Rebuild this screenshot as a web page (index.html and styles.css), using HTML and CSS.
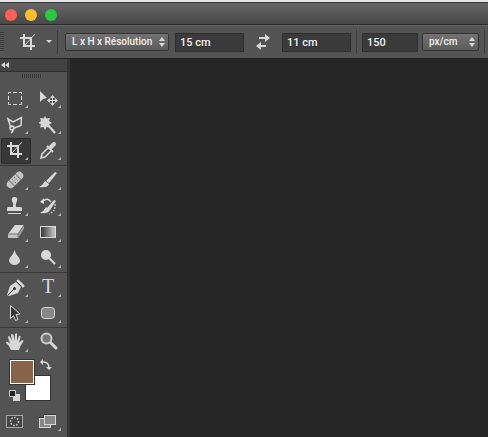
FILE: index.html
```html
<!DOCTYPE html>
<html lang="fr">
<head>
<meta charset="utf-8">
<title>Recadrage</title>
<link rel="stylesheet" href="styles.css">
</head>
<body>
<header class="titlebar">
  <button class="light close" aria-label="Fermer"></button>
  <button class="light minimize" aria-label="Réduire"></button>
  <button class="light expand" aria-label="Agrandir"></button>
</header>

<div class="options">
  <span class="grip"></span>
  <button class="preset" aria-label="Outil Recadrage">
    <svg width="34" height="20" viewBox="0 0 34 20"><path class="line2" d="M0 6h12M4 2v12M3 14h12M11 6v12"/><path class="line" d="M5 13L15 2"/><path class="fill" d="M26 8h6l-3 3z"/></svg>
  </button>
  <span class="rule"></span>
  <span class="picker ratio">
    <select aria-label="Rapport"><option>L x H x Résolution</option></select>
    <svg width="6" height="10" viewBox="0 0 6 10"><path class="fill" d="M0 4l3-4 3 4zM0 6h6l-3 4z"/></svg>
  </span>
  <input class="field" aria-label="Largeur" value="15 cm">
  <button class="swap" aria-label="Permuter">
    <svg width="16" height="16" viewBox="0 0 16 16"><path class="fill" d="M4 3h6V0l5 4-5 4V5H4zM11 11H6V8l-5 4 5 4v-3h5z"/></svg>
  </button>
  <input class="field" aria-label="Hauteur" value="11 cm">
  <span class="rule tight"></span>
  <input class="field resolution" aria-label="Résolution" value="150">
  <span class="picker unit">
    <select aria-label="Unité"><option>px/cm</option></select>
    <svg width="6" height="10" viewBox="0 0 6 10"><path class="fill" d="M0 4l3-4 3 4zM0 6h6l-3 4z"/></svg>
  </span>
  <span class="rule tight"></span>
</div>

<main class="workspace">
  <aside class="panel">
    <button class="collapse" aria-label="Réduire le panneau">
      <svg width="8" height="6" viewBox="0 0 8 6"><path class="fill" d="M4 0v6L0 3zM8 0v6L4 3z"/></svg>
    </button>
    <div class="handle"></div>

    <div class="tools">
      <button class="tool" aria-label="Rectangle de sélection"><svg viewBox="0 0 30 26"><path class="line" d="M7.500 8V6.500H10M12 6.500h4M18 6.500h2.500V8M20.500 10v4M20.500 16v2.500H18M16 18.500h-4M10 18.500H7.500V16M7.500 14v-4"/><path class="corner" d="M27 19v3h-3z"/></svg></button>
      <button class="tool" aria-label="Déplacement"><svg viewBox="0 0 30 26"><path class="fill" d="M6 5v11l3-3 4-1z"/><path class="line" d="M14 14.500h9M18.500 10v9"/><path class="fill" d="M18.500 9l2.500 3h-5zM18.500 20l2.500-3h-5zM13 14.500l3-2.500v5zM24 14.500L21 12v5z"/><path class="corner" d="M27 19v3h-3z"/></svg></button>
      <button class="tool" aria-label="Lasso polygonal"><svg viewBox="0 0 30 26"><path class="line1" d="M10 16L7 7l5 3 8.500-4.500-.5 8-8 3"/><circle class="line1" cx="11" cy="16" r="2"/><path class="line1" d="M11 17q2 2-1 4"/><path class="corner" d="M27 19v3h-3z"/></svg></button>
      <button class="tool" aria-label="Baguette magique"><svg viewBox="0 0 30 26"><path class="fill" d="M11 4l1.500 2.500L16 6l-1 3 3 2-3 1.500 1 3-3.500-.5L11 18l-1.500-3-3.500.5 1-3L4.500 11 7 9 6 6l3.500.5z"/><path class="line2" d="M14 13l7 8"/><path class="corner" d="M27 19v3h-3z"/></svg></button>
      <button class="tool active" aria-label="Recadrage"><svg viewBox="0 0 30 26"><path class="line2" d="M6 8h12M10 4v12M9 16h12M17 8v12"/><path class="line" d="M11 15L21 4"/><path class="corner" d="M27 19v3h-3z"/></svg></button>
      <button class="tool" aria-label="Pipette"><svg viewBox="0 0 30 26"><path class="line1" d="M14 10l-6 6-1 4 4-1 6-6"/><path class="line2" d="M13 8l6 6"/><path class="line4" d="M17 9l3-3"/><path class="corner" d="M27 19v3h-3z"/></svg></button>
    </div>
    <div class="tools">
      <button class="tool" aria-label="Correcteur"><svg viewBox="0 0 30 26"><g transform="rotate(-45 14 13)"><rect class="metal" x="4" y="9" width="20" height="8" rx="4"/><path class="seam" d="M9.500 9v8M18.500 9v8M12 11h1M15 11h1M12 13h1M15 13h1M12 15h1M15 15h1"/></g><path class="corner" d="M27 20v3h-3z"/></svg></button>
      <button class="tool" aria-label="Pinceau"><svg viewBox="0 0 30 26"><path class="fill" d="M21 5l2 1-8 10-3-2zM11 14l4 3q-1 4-10 3 4-2 6-6z"/><path class="corner" d="M27 20v3h-3z"/></svg></button>
      <button class="tool" aria-label="Tampon"><svg viewBox="0 0 30 26"><path class="fill" d="M12 14q1-3-1-6-1-4 2.500-4T16 8q-2 3-1 6h5q1 0 1 2v2H6v-2q0-2 1-2z"/><path class="line" d="M7 20.500h13"/><path class="corner" d="M27 20v3h-3z"/></svg></button>
      <button class="tool" aria-label="Forme d’historique"><svg viewBox="0 0 30 26"><path class="fill" d="M20 7l2 1-6 9-3-2zM12 14l4 3q-2 4-10 3 4-2 6-6z"/><path class="line1" d="M9 8q5-4 8 1"/><path class="fill" d="M6 9l4-4v6z"/><path class="dots" d="M21 11q1 7-6 10"/><path class="corner" d="M27 20v3h-3z"/></svg></button>
      <button class="tool" aria-label="Gomme"><svg viewBox="0 0 30 26"><path class="fill" d="M14 6h9l-6 9H7z"/><path class="shade" d="M23 6v4l-6 9v-4z"/><path class="metal" d="M7 15h10v4H7z"/><path class="seam" d="M7 15h10l6-9M17 15v4"/><path class="corner" d="M27 20v3h-3z"/></svg></button>
      <button class="tool" aria-label="Dégradé"><svg viewBox="0 0 30 26"><defs><linearGradient id="ramp"><stop offset="0" stop-color="#333"/><stop offset="1" stop-color="#ccc"/></linearGradient></defs><rect class="ramp" x="6.500" y="7.500" width="15" height="11"/><path class="corner" d="M27 20v3h-3z"/></svg></button>
      <button class="tool" aria-label="Goutte d’eau"><svg viewBox="0 0 30 26"><path class="fill" d="M13.500 5q1 4 4 7 3 4 0 6.500-4 3-8 0-3-3 0-6.500 3-3 4-7z"/><path class="corner" d="M27 20v3h-3z"/></svg></button>
      <button class="tool" aria-label="Densité -"><svg viewBox="0 0 30 26"><circle class="fill" cx="12" cy="10" r="5"/><path class="line2" d="M15 13l6 6"/><path class="corner" d="M27 20v3h-3z"/></svg></button>
    </div>
    <div class="tools">
      <button class="tool" aria-label="Plume"><svg viewBox="0 0 30 26"><path class="fill" d="M6 21l3-9 6-4 5 5-3 6-9 3z"/><path class="line3" d="M17 7l5 5"/><path class="dark" d="M7 21l6-6M15.500 7.500l5 5"/><circle class="hole" cx="13.500" cy="14.500" r="1.500"/><path class="corner" d="M27 20v3h-3z"/></svg></button>
      <button class="tool" aria-label="Texte"><svg viewBox="0 0 30 26"><text class="glyph" x="14" y="19" text-anchor="middle">T</text><path class="corner" d="M27 20v3h-3z"/></svg></button>
      <button class="tool" aria-label="Sélection de tracé"><svg viewBox="0 0 30 26"><path class="outline" d="M9.500 5.500v13l3-3 2 5 2.500-1-2-5 4-.5z"/><path class="corner" d="M27 20v3h-3z"/></svg></button>
      <button class="tool" aria-label="Rectangle arrondi"><svg viewBox="0 0 30 26"><rect class="shape" x="7.500" y="7.500" width="13" height="11" rx="3"/><path class="corner" d="M27 20v3h-3z"/></svg></button>
    </div>
    <div class="tools">
      <button class="tool" aria-label="Main"><svg viewBox="0 0 30 26"><path class="fill" d="M10 21q-1-4-5-7 0-2 2-1l2 2-2-7q1-2 2 0l2 4-1-6q1-2 2.500 0l1 6 .5-7q1.500-1.500 2 0v7l2-5q2-1 1.500 1l-1.500 6 3-3q2 0 1 2-3 4-4 8z"/><path class="corner" d="M27 20v3h-3z"/></svg></button>
      <button class="tool" aria-label="Zoom"><svg viewBox="0 0 30 26"><circle class="lens" cx="12.500" cy="9.500" r="5"/><path class="line3" d="M17 14l5 5"/></svg></button>
    </div>

    <div class="colors">
      <button class="swatch back" aria-label="Arrière-plan"></button>
      <button class="swatch front" aria-label="Premier plan"></button>
      <button class="flip" aria-label="Permuter les couleurs"><svg width="12" height="12" viewBox="0 0 12 12"><path class="line1" d="M3 3q6 0 6 6"/><path class="fill" d="M0 3l3-3v6zM9 11L6 8h6z"/></svg></button>
      <button class="reset" aria-label="Couleurs par défaut"><svg width="11" height="11" viewBox="0 0 11 11"><path class="fill" d="M4 4h7v7H4z"/><path class="chip" d="M.5.5h6v6h-6z"/></svg></button>
    </div>

    <div class="tools modes">
      <button class="tool" aria-label="Masque"><svg viewBox="0 0 30 26"><rect class="frame" x="5.500" y="7.500" width="16" height="12"/><circle class="dots" cx="13.500" cy="13.500" r="4"/></svg></button>
      <button class="tool" aria-label="Mode d’écran"><svg viewBox="0 0 30 26"><path class="dark" d="M10 6.500h12M5 9.500h5"/><rect class="shape" x="5.500" y="10.500" width="11" height="9"/><rect class="shape" x="10.500" y="7.500" width="11" height="9"/><path class="corner" d="M27 20v3h-3z"/></svg></button>
    </div>
  </aside>
  <section class="canvas" aria-label="Document"></section>
</main>
</body>
</html>
```
FILE: styles.css
```css
* { box-sizing: border-box; }

body {
  margin: 0;
  min-height: 100vh;
  display: flex;
  flex-direction: column;
  background: #262626;
  font: 500 11px/14px Roboto, "Liberation Sans", sans-serif;
  color: #f0f0f0;
}

button {
  padding: 0;
  border: 0;
  background: none;
}

svg { display: block; }

.titlebar {
  height: 25px;
  display: flex;
  align-items: center;
  gap: 8px;
  padding: 4px 5px 0;
  border-top: 2px solid #e3e5e6;
  border-bottom: 1px solid #292929;
  background: linear-gradient(#3a3a3a 1px, #666 1px, #484848);
}

.light {
  width: 12px;
  height: 12px;
  border-radius: 50%;
}

.close { background: #ff5f57; }
.minimize { background: #ffbd2e; }
.expand { background: #28ca42; }

.options {
  height: 34px;
  display: flex;
  align-items: center;
  overflow: hidden;
  border-top: 1px solid #636363;
  border-bottom: 1px solid #222;
  background: #535353;
}

.options > * { flex-shrink: 0; }

.grip {
  width: 4px;
  height: 20px;
  background: repeating-linear-gradient(#333 0 1px, #606060 1px 2px);
}

.preset { margin: 0 3px 0 16px; }

.rule {
  width: 1px;
  height: 24px;
  background: #3a3a3a;
}

.tight { margin: 0 5px; }

.picker {
  position: relative;
  height: 18px;
}

.picker svg {
  position: absolute;
  right: 4px;
  top: 4px;
  pointer-events: none;
}

.picker select {
  appearance: none;
  width: 100%;
  height: 18px;
  padding: 0 6px;
  border: 1px solid #333;
  border-radius: 2px;
  background: linear-gradient(#727272, #5c5c5c);
  font: inherit;
  font-size: 10px;
  color: inherit;
}

.ratio {
  width: 104px;
  margin: 0 6px 0 7px;
}

.unit {
  width: 57px;
  margin-left: 4px;
}

.field {
  width: 69px;
  height: 19px;
  padding: 0 4px;
  border: 1px solid #2e2e2e;
  background: #3a3a3a;
  font: inherit;
  color: inherit;
}

.resolution { width: 56px; }

.swap { margin: 0 11px; }

.workspace {
  flex: 1;
  display: flex;
}

.panel {
  width: 70px;
  border-right: 3px solid #333;
  background: #535353;
}

.collapse {
  display: block;
  width: 100%;
  height: 13px;
  padding-left: 1px;
  border-bottom: 1px solid #303030;
  background: #424242;
}

.handle {
  width: 20px;
  height: 4px;
  margin: 2px 0 8px 22px;
  background: repeating-linear-gradient(90deg, #333 0 1px, #5c5c5c 1px 2px);
}

.tools {
  display: grid;
  grid-template-columns: 30px 30px;
  column-gap: 3px;
  padding-left: 1px;
}

.tools + .tools {
  margin-top: 1px;
  padding-top: 1px;
  border-top: 1px solid #383838;
}

.tool {
  height: 26px;
  border-radius: 2px;
}

.active {
  background: #383838;
  box-shadow: inset 0 0 0 1px #2c2c2c;
}

.tool svg {
  width: 30px;
  height: 26px;
}

.fill { fill: #d8d8d8; }
.metal { fill: #c4c4c4; }
.shade { fill: #999; }
.corner { fill: #b5b5b5; }
.hole { fill: #333; }
.glyph { font: 20px "Liberation Serif", serif; fill: #d8d8d8; }
.line, .line1, .line2, .line3, .line4 { fill: none; stroke: #d8d8d8; }
.line1 { stroke-width: 1.5; }
.line2 { stroke-width: 2; }
.line3 { stroke-width: 3; stroke-linecap: round; }
.line4 { stroke-width: 4; stroke-linecap: round; }
.dark { fill: none; stroke: #333; }
.seam { fill: none; stroke: #777; }
.ramp { fill: url(#ramp); stroke: #d8d8d8; }
.outline { fill: #353535; stroke: #d8d8d8; }
.shape { fill: #888; stroke: #d8d8d8; }
.lens { fill: #777; stroke: #ccc; stroke-width: 2; }
.frame { fill: #454545; stroke: #a8a8a8; }
.dots { fill: none; stroke: #ccc; stroke-width: 1.5; stroke-dasharray: 1.5 1.5; }
.chip { fill: #222; stroke: #ccc; }

.colors {
  display: grid;
  grid-template-columns: 16px 10px 15px;
  grid-template-rows: 17px 8px 17px;
  margin: 4px 0 0 9px;
}

.swatch {
  width: 26px;
  height: 26px;
  border: 1px solid #333;
}

.front {
  grid-area: 1 / 1 / 3 / 3;
  background: #896347;
  box-shadow: inset 0 0 0 1px #fff;
}

.back {
  grid-area: 2 / 2 / 4 / 4;
  margin-top: -1px;
  background: #fff;
}

.flip {
  grid-area: 1 / 3;
  align-self: start;
  margin-left: 5px;
}

.reset {
  grid-area: 3 / 1;
  align-self: end;
  justify-self: start;
}

.modes { margin-top: 7px; }

.canvas {
  flex: 1;
  background: #262626;
}
```
